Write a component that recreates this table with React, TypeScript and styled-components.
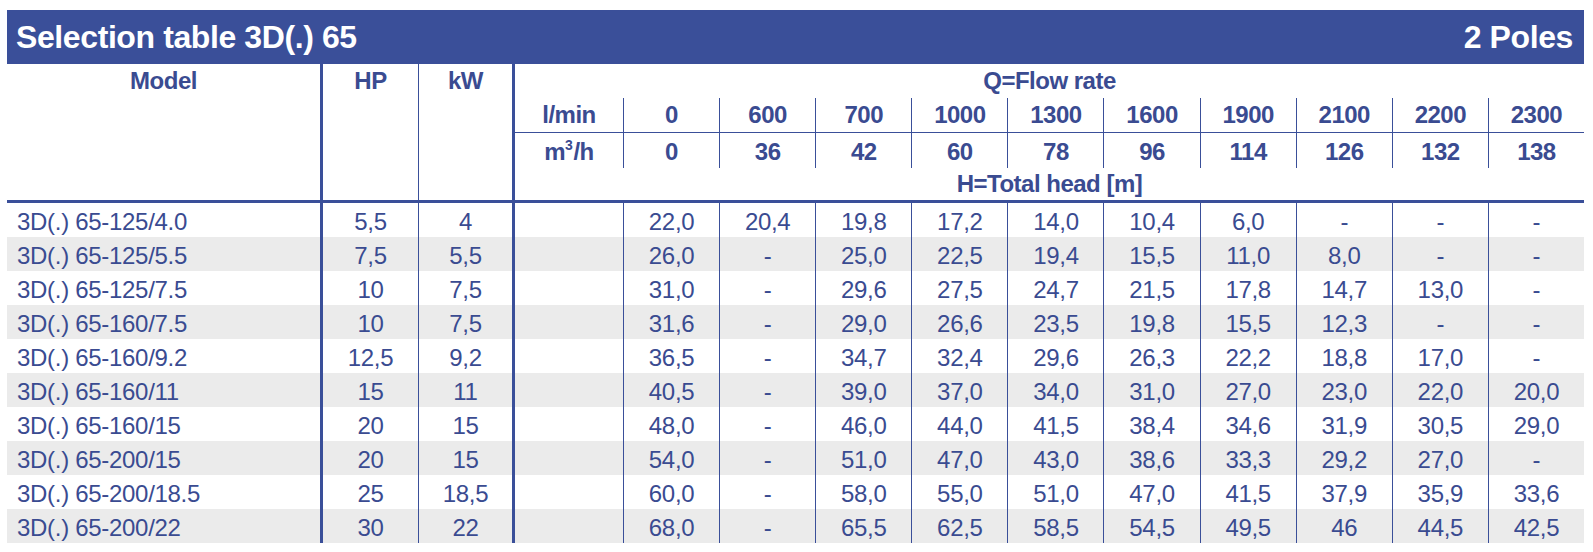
import React from "react";
import styled, { createGlobalStyle } from "styled-components";

const BLUE = "#3a4f99";
const INK = "#3a4b91";
const SHADE = "#ebebeb";
const COLS = "313px 98px 94px 111px repeat(10, 1fr)";

type Edge = "thick" | "thin" | "none";
const edgeWidth = (e: Edge) => (e === "thick" ? "3px" : e === "thin" ? "1px" : "0");

const Global = createGlobalStyle`
  *, *::before, *::after { box-sizing: border-box; }
  html, body { margin: 0; padding: 0; background: #fff; }
  body { font-family: "Liberation Sans", Arial, sans-serif; }
`;

const Page = styled.div`
  width: 1593px;
  padding: 10px 9px 0 7px;
`;

const TitleBar = styled.div`
  height: 54px;
  background: ${BLUE};
  color: #fff;
  display: flex;
  align-items: center;
  justify-content: space-between;
  padding: 0 11px 0 9px;
  font-weight: 700;
  font-size: 32px;
  letter-spacing: -0.4px;
`;

const Header = styled.div`
  display: grid;
  grid-template-columns: ${COLS};
  grid-template-rows: 34px 35px 35px 32px;
  border-bottom: 3px solid ${BLUE};
  color: ${INK};
  font-weight: 700;
  font-size: 24px;
  letter-spacing: -0.5px;
`;

const ColHead = styled.div<{ $col: number; $edge: Edge }>`
  grid-column: ${(p) => p.$col};
  grid-row: 1 / 5;
  border-left: ${(p) => edgeWidth(p.$edge)} solid ${BLUE};
  text-align: center;
  line-height: 34px;
`;

const GroupHead = styled.div<{ $row: number }>`
  grid-column: 4 / 15;
  grid-row: ${(p) => p.$row};
  border-left: 3px solid ${BLUE};
  text-align: center;
  line-height: ${(p) => (p.$row === 1 ? "34px" : "32px")};
`;

const ScaleCell = styled.div<{ $row: number; $col: number; $edge: Edge }>`
  grid-column: ${(p) => p.$col};
  grid-row: ${(p) => p.$row};
  border-left: ${(p) => edgeWidth(p.$edge)} solid ${BLUE};
  border-bottom: ${(p) => (p.$row === 2 ? `1px solid ${BLUE}` : "0")};
  display: flex;
  align-items: center;
  justify-content: center;
  padding-top: ${(p) => (p.$row === 3 ? "2px" : "0")};
`;

const Sup = styled.sup`
  font-size: 14px;
  line-height: 0;
  vertical-align: 10px;
  margin: 0 1px 0 0;
`;

const Body = styled.div`
  display: flex;
  flex-direction: column;
  color: ${INK};
  font-size: 24px;
  letter-spacing: -0.3px;
`;

const Row = styled.div<{ $shade: boolean }>`
  display: grid;
  grid-template-columns: ${COLS};
  height: 34px;
  background: ${(p) => (p.$shade ? SHADE : "#fff")};
`;

const ModelCell = styled.div`
  display: flex;
  align-items: center;
  padding: 3px 0 0 10px;
  white-space: nowrap;
`;

const NumCell = styled.div<{ $edge: Edge }>`
  display: flex;
  align-items: center;
  justify-content: center;
  padding-top: 3px;
  border-left: ${(p) => edgeWidth(p.$edge)} solid ${BLUE};
`;

const LMIN = ["0", "600", "700", "1000", "1300", "1600", "1900", "2100", "2200", "2300"];
const M3H = ["0", "36", "42", "60", "78", "96", "114", "126", "132", "138"];

type DataRow = [string, string, string, string[]];

const ROWS: DataRow[] = [
  ["3D(.) 65-125/4.0", "5,5", "4", ["22,0", "20,4", "19,8", "17,2", "14,0", "10,4", "6,0", "-", "-", "-"]],
  ["3D(.) 65-125/5.5", "7,5", "5,5", ["26,0", "-", "25,0", "22,5", "19,4", "15,5", "11,0", "8,0", "-", "-"]],
  ["3D(.) 65-125/7.5", "10", "7,5", ["31,0", "-", "29,6", "27,5", "24,7", "21,5", "17,8", "14,7", "13,0", "-"]],
  ["3D(.) 65-160/7.5", "10", "7,5", ["31,6", "-", "29,0", "26,6", "23,5", "19,8", "15,5", "12,3", "-", "-"]],
  ["3D(.) 65-160/9.2", "12,5", "9,2", ["36,5", "-", "34,7", "32,4", "29,6", "26,3", "22,2", "18,8", "17,0", "-"]],
  ["3D(.) 65-160/11", "15", "11", ["40,5", "-", "39,0", "37,0", "34,0", "31,0", "27,0", "23,0", "22,0", "20,0"]],
  ["3D(.) 65-160/15", "20", "15", ["48,0", "-", "46,0", "44,0", "41,5", "38,4", "34,6", "31,9", "30,5", "29,0"]],
  ["3D(.) 65-200/15", "20", "15", ["54,0", "-", "51,0", "47,0", "43,0", "38,6", "33,3", "29,2", "27,0", "-"]],
  ["3D(.) 65-200/18.5", "25", "18,5", ["60,0", "-", "58,0", "55,0", "51,0", "47,0", "41,5", "37,9", "35,9", "33,6"]],
  ["3D(.) 65-200/22", "30", "22", ["68,0", "-", "65,5", "62,5", "58,5", "54,5", "49,5", "46", "44,5", "42,5"]],
];

export default function App() {
  return (
    <Page>
      <Global />
      <TitleBar>
        <span>Selection table 3D(.) 65</span>
        <span>2 Poles</span>
      </TitleBar>
      <Header>
        <ColHead $col={1} $edge="none">Model</ColHead>
        <ColHead $col={2} $edge="thick">HP</ColHead>
        <ColHead $col={3} $edge="thin">kW</ColHead>
        <GroupHead $row={1}>Q=Flow rate</GroupHead>
        <ScaleCell $row={2} $col={4} $edge="thick">l/min</ScaleCell>
        {LMIN.map((v, i) => (
          <ScaleCell key={`l${i}`} $row={2} $col={5 + i} $edge="thin">
            {v}
          </ScaleCell>
        ))}
        <ScaleCell $row={3} $col={4} $edge="thick">
          <span>
            m<Sup>3</Sup>/h
          </span>
        </ScaleCell>
        {M3H.map((v, i) => (
          <ScaleCell key={`m${i}`} $row={3} $col={5 + i} $edge="thin">
            {v}
          </ScaleCell>
        ))}
        <GroupHead $row={4}>H=Total head [m]</GroupHead>
      </Header>
      <Body>
        {ROWS.map(([model, hp, kw, heads], r) => (
          <Row key={model} $shade={r % 2 === 1}>
            <ModelCell>{model}</ModelCell>
            <NumCell $edge="thick">{hp}</NumCell>
            <NumCell $edge="thin">{kw}</NumCell>
            <NumCell $edge="thick" />
            {heads.map((h, i) => (
              <NumCell key={i} $edge="thin">
                {h}
              </NumCell>
            ))}
          </Row>
        ))}
      </Body>
    </Page>
  );
}
